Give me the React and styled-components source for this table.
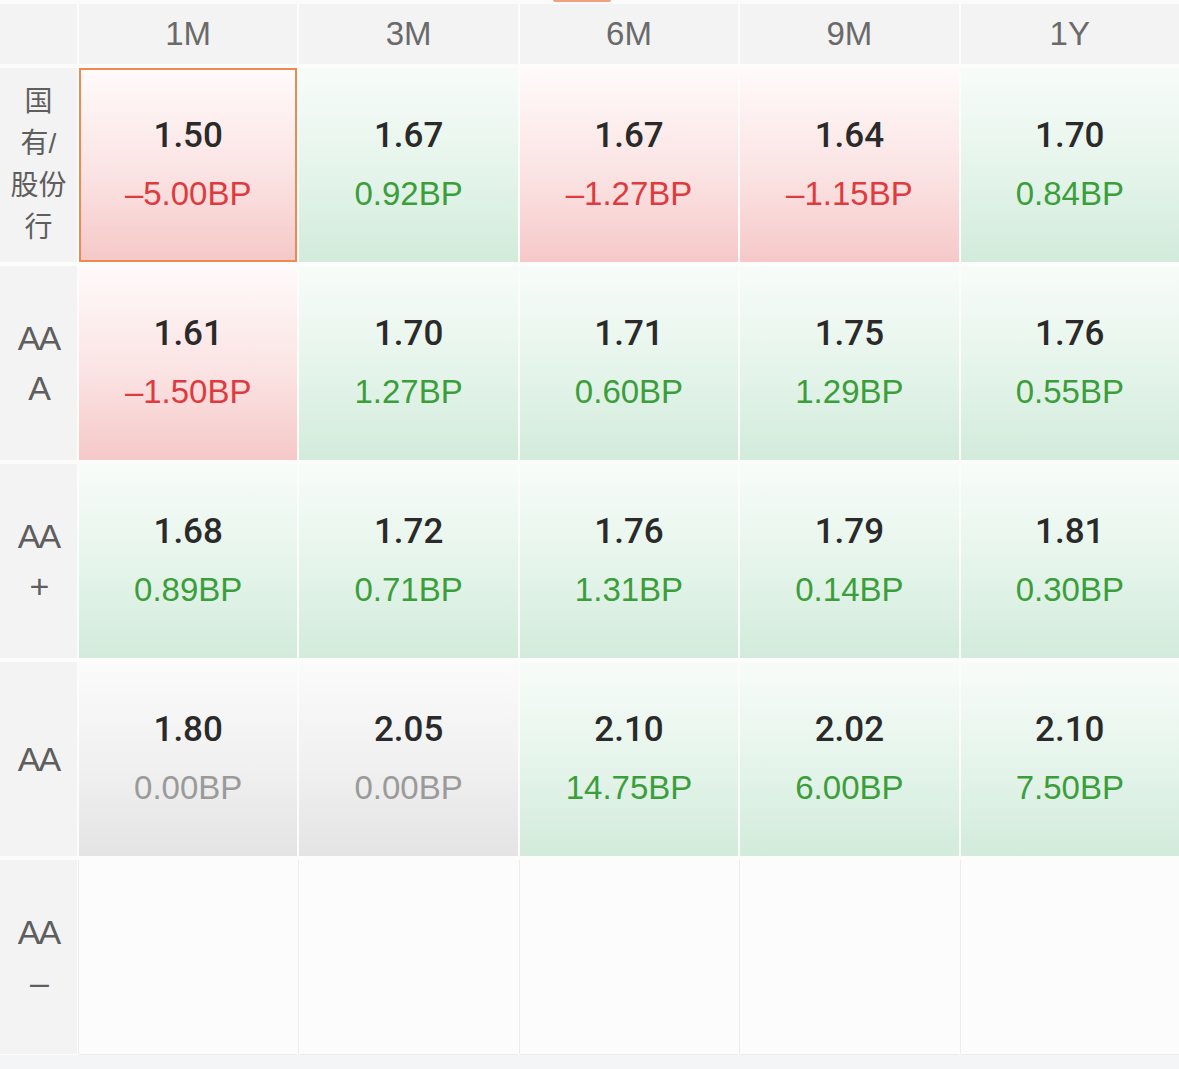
import React from "react";
import styled, { createGlobalStyle, css } from "styled-components";

const GlobalStyle = createGlobalStyle`
	html, body {
		margin: 0;
		padding: 0;
		background: #f4f5f7;
	}
	body {
		font-family: "Liberation Sans", "Noto Sans CJK SC", sans-serif;
	}
`;

const Page = styled.div`
	width: 1179px;
	height: 1069px;
	background: #f4f5f7;
	overflow: hidden;
`;

const TopStrip = styled.div`
	height: 4px;
	background: #fbfbfb;
	padding-left: 553px;
`;

const Indicator = styled.div`
	width: 58px;
	height: 2px;
	background: #f0a27c;
	border-radius: 0 0 2px 2px;
`;

const Grid = styled.div`
	display: grid;
	grid-template-columns: 77px repeat(5, 1fr);
	grid-template-rows: 60px repeat(5, 194px);
	column-gap: 2px;
	row-gap: 4px;
	background: #fcfcfc;
	padding-bottom: 1px;
`;

const HeadCell = styled.div`
	background: #f3f3f3;
	display: flex;
	align-items: center;
	justify-content: center;
	font-size: 33px;
	color: #6a6a6a;
`;

const RowLabel = styled.div`
	background: #f3f3f3;
	display: flex;
	flex-direction: column;
	align-items: center;
	justify-content: center;
	color: #5e5e5e;
	font-size: ${p => (p.$cjk ? "28px" : "34px")};
	line-height: ${p => (p.$cjk ? "42px" : "50px")};
	letter-spacing: ${p => (p.$cjk ? "0" : "-2px")};
`;

const LabelLine = styled.span`
	display: block;
`;

const tones = {
	up: css`
		background: linear-gradient(180deg, #fffafa 0%, #fbe3e3 55%, #f6c8c8 100%);
	`,
	down: css`
		background: linear-gradient(180deg, #f8fcf9 0%, #e4f4ea 55%, #d2ebdb 100%);
	`,
	flat: css`
		background: linear-gradient(180deg, #fbfbfb 0%, #f0f0f0 55%, #e4e4e4 100%);
	`,
	empty: css`
		background: #fcfcfc;
		box-shadow: -1px 0 0 #ececec, 0 1px 0 #ececec;
	`,
};

const Cell = styled.div`
	box-sizing: border-box;
	display: flex;
	flex-direction: column;
	align-items: center;
	justify-content: center;
	gap: 18px;
	${p => tones[p.$tone]}
	${p =>
		p.$active &&
		css`
			border: 2px solid #ec8a52;
		`}
`;

const Rate = styled.div`
	font-family: Roboto, "Liberation Sans", sans-serif;
	font-weight: 500;
	font-size: 35px;
	line-height: 40px;
	color: #2a2a2a;
`;

const deltaColors = {
	up: "#de3b3f",
	down: "#3b9e3b",
	flat: "#9a9a9a",
};

const Delta = styled.div`
	font-size: 33px;
	line-height: 40px;
	color: ${p => deltaColors[p.$tone]};
`;

const terms = ["1M", "3M", "6M", "9M", "1Y"];

const rows = [
	{
		label: ["国", "有/", "股份", "行"],
		cjk: true,
		cells: [
			["1.50", "–5.00BP"],
			["1.67", "0.92BP"],
			["1.67", "–1.27BP"],
			["1.64", "–1.15BP"],
			["1.70", "0.84BP"],
		],
	},
	{
		label: ["AA", "A"],
		cells: [
			["1.61", "–1.50BP"],
			["1.70", "1.27BP"],
			["1.71", "0.60BP"],
			["1.75", "1.29BP"],
			["1.76", "0.55BP"],
		],
	},
	{
		label: ["AA", "+"],
		cells: [
			["1.68", "0.89BP"],
			["1.72", "0.71BP"],
			["1.76", "1.31BP"],
			["1.79", "0.14BP"],
			["1.81", "0.30BP"],
		],
	},
	{
		label: ["AA"],
		cells: [
			["1.80", "0.00BP"],
			["2.05", "0.00BP"],
			["2.10", "14.75BP"],
			["2.02", "6.00BP"],
			["2.10", "7.50BP"],
		],
	},
	{
		label: ["AA", "–"],
		cells: [null, null, null, null, null],
	},
];

function toneOf(cell) {
	if (!cell) return "empty";
	const d = cell[1];
	if (d.startsWith("–")) return "up";
	if (d.startsWith("0.00")) return "flat";
	return "down";
}

export default function App() {
	return (
		<Page>
			<GlobalStyle />
			<TopStrip>
				<Indicator />
			</TopStrip>
			<Grid>
				<HeadCell />
				{terms.map(t => (
					<HeadCell key={t}>{t}</HeadCell>
				))}
				{rows.map((row, ri) => (
					<React.Fragment key={ri}>
						<RowLabel $cjk={row.cjk}>
							{row.label.map((l, li) => (
								<LabelLine key={li}>{l}</LabelLine>
							))}
						</RowLabel>
						{row.cells.map((cell, ci) => {
							const tone = toneOf(cell);
							return (
								<Cell key={ci} $tone={tone} $active={ri === 0 && ci === 0}>
									{cell && (
										<>
											<Rate>{cell[0]}</Rate>
											<Delta $tone={tone}>{cell[1]}</Delta>
										</>
									)}
								</Cell>
							);
						})}
					</React.Fragment>
				))}
			</Grid>
		</Page>
	);
}
